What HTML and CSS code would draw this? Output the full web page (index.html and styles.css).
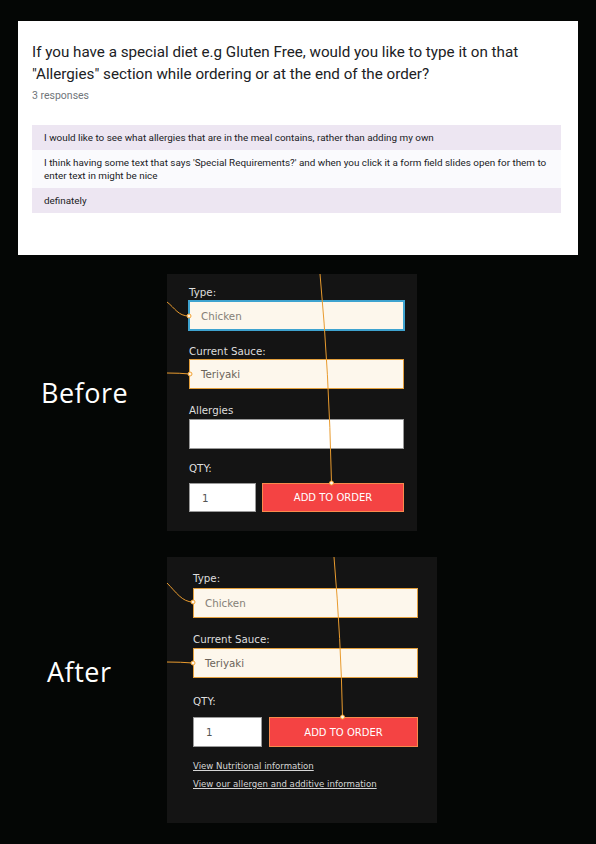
FILE: index.html
```html
<!DOCTYPE html>
<html lang="en">
<head>
<meta charset="utf-8">
<title>Allergies feedback</title>
<link rel="stylesheet" href="styles.css">
</head>
<body>
<div class="card">
  <h1 class="q">If you have a special diet e.g Gluten Free, would you like to type it on that<br>"Allergies" section while ordering or at the end of the order?</h1>
  <p class="count">3 responses</p>
  <div class="answers">
    <div class="ans alt">I would like to see what allergies that are in the meal contains, rather than adding my own</div>
    <div class="ans">I think having some text that says 'Special Requirements?' and when you click it a form field slides open for them to<br>enter text in might be nice</div>
    <div class="ans alt">definately</div>
  </div>
</div>

<section class="compare before">
  <div class="tag">Before</div>
  <div class="panel">
    <div class="label">Type:</div>
    <div class="field cream focus">Chicken</div>
    <div class="label l-sauce">Current Sauce:</div>
    <div class="field cream dark">Teriyaki</div>
    <div class="label l-allergy">Allergies</div>
    <div class="field white"></div>
    <div class="label l-qty">QTY:</div>
    <div class="order">
      <div class="field white qty">1</div>
      <div class="btn">ADD TO ORDER</div>
    </div>
  </div>
</section>

<section class="compare after">
  <div class="tag">After</div>
  <div class="panel">
    <div class="label">Type:</div>
    <div class="field cream">Chicken</div>
    <div class="label l-sauce">Current Sauce:</div>
    <div class="field cream dark">Teriyaki</div>
    <div class="label l-qty">QTY:</div>
    <div class="order">
      <div class="field white qty">1</div>
      <div class="btn">ADD TO ORDER</div>
    </div>
    <a class="link l1">View Nutritional information</a>
    <a class="link l2">View our allergen and additive information</a>
  </div>
</section>

<svg class="notes" viewBox="0 0 596 844" width="596" height="844" aria-hidden="true">
  <g fill="none" stroke="#e99b2e" stroke-width="1">
    <path d="M320 274 Q329 370 331.5 483"/>
    <path d="M167 302 C175 308 178 316 189 316"/>
    <path d="M167 373 Q180 373 190 374"/>
    <path d="M334 557 Q341 640 342.5 717"/>
    <path d="M167 583 C176 592 182 602 193 602"/>
    <path d="M167 662 Q181 662 193 663"/>
  </g>
  <g fill="#fff6e6" stroke="#f2a233" stroke-width="1">
    <circle cx="331.5" cy="483" r="2"/>
    <circle cx="189" cy="316" r="2"/>
    <circle cx="190" cy="374" r="2"/>
    <circle cx="342.5" cy="717" r="2"/>
    <circle cx="193" cy="602" r="2"/>
    <circle cx="193" cy="663" r="2"/>
  </g>
</svg>
</body>
</html>
```

FILE: styles.css
```css
html, body {
  margin: 0;
  background: #040605;
}
body {
  position: relative;
  min-height: 844px;
  padding-top: 21px;
  box-sizing: border-box;
  font-family: "DejaVu Sans", "Liberation Sans", sans-serif;
}

/* Survey card */
.card {
  margin-left: 18px;
  width: 560px;
  height: 234px;
  box-sizing: border-box;
  background: #ffffff;
  padding: 20px 17px 0 14px;
  font-family: Roboto, "Liberation Sans", sans-serif;
}
.q {
  margin: 0;
  font-size: 15.2px;
  font-weight: 400;
  line-height: 22px;
  color: #202124;
}
.count {
  margin: 4px 0 0;
  font-size: 10.5px;
  line-height: 14px;
  color: #70757a;
}
.answers {
  margin-top: 22px;
  width: 529px;
}
.ans {
  padding: 6px 12px;
  font-size: 9.9px;
  line-height: 13px;
  color: #202124;
  background: #fafafd;
}
.ans.alt {
  background: #ede6f2;
}

/* Before / after */
.compare {
  display: flex;
  align-items: flex-start;
}
.before { margin-top: 19px; }
.after { margin-top: 26px; }

.tag {
  width: 167px;
  box-sizing: border-box;
  color: #ffffff;
  font-family: "Open Sans", "Liberation Sans", sans-serif;
  font-size: 27px;
  letter-spacing: 0.5px;
  line-height: 34px;
}
.before .tag { padding-left: 41px; margin-top: 102px; }
.after .tag { padding-left: 47px; margin-top: 98px; }

.panel {
  background: #141414;
  color: #e6e6e6;
  box-sizing: border-box;
  display: flex;
  flex-direction: column;
}
.before .panel {
  width: 250px;
  height: 257px;
  padding: 12px 13px 0 22px;
}
.after .panel {
  width: 270px;
  height: 266px;
  padding: 15px 19px 0 26px;
}

.label {
  font-size: 10.3px;
  line-height: 12px;
  color: #dedede;
}
.field {
  height: 30px;
  box-sizing: border-box;
  border: 1px solid #8a8a8a;
  display: flex;
  align-items: center;
  padding-left: 11px;
  font-size: 10.3px;
  color: #857f77;
}
.field.cream {
  background: #fdf7ec;
  border-color: #e3a03e;
}
.field.dark { color: #6b6359; }
.field.white {
  background: #ffffff;
  border-color: #9a9a9a;
}
.field.focus {
  height: 31px;
  border: 2px solid #3ea3cf;
  margin: 0 -1px;
}

/* Before spacing */
.before .label { margin-bottom: 2px; }
.before .l-sauce { margin-top: 14px; }
.before .l-allergy { margin-top: 15px; margin-bottom: 3px; }
.before .l-qty { margin-top: 13px; margin-bottom: 9px; }
.before .order { gap: 6px; }
.before .qty { width: 67px; height: 29px; }
.before .btn { height: 29px; }

/* After spacing */
.after .label { margin-bottom: 4px; }
.after .l-sauce { margin-top: 15px; margin-bottom: 3px; }
.after .l-qty { margin-top: 17px; margin-bottom: 10px; }
.after .order { gap: 7px; }
.after .qty { width: 69px; }
.after .btn { height: 30px; }

.order {
  display: flex;
}
.qty {
  flex: none;
  padding-left: 12px;
  color: #555555;
}
.btn {
  flex: 1;
  box-sizing: border-box;
  background: #f44343;
  border: 1px solid #f98a4c;
  color: #ffffff;
  font-size: 10px;
  display: flex;
  align-items: center;
  justify-content: center;
}

.link {
  font-size: 8.6px;
  line-height: 12px;
  color: #d6d6d6;
  text-decoration: underline;
}
.l1 { margin-top: 13px; }
.l2 { margin-top: 6px; }

.notes {
  position: absolute;
  top: 0;
  left: 0;
  pointer-events: none;
}
```
